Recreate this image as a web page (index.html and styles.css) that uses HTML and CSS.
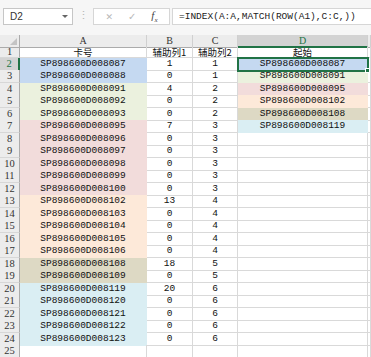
FILE: index.html
```html
<!DOCTYPE html>
<html lang="zh">
<head>
  <meta charset="UTF-8" />
  <title>Sheet1</title>
  <link rel="stylesheet" href="styles.css">
</head>
<body>

  <div class="fbar">
    <div class="namebox"><span>D2</span><span class="arrow"></span></div>
    <div class="grip">⋮</div>
    <div class="btns">
      <span class="x">✕</span>
      <span class="ok">✓</span>
      <span class="fx">f<sub>x</sub></span>
    </div>
    <div class="formula">=INDEX(A:A,MATCH(ROW(A1),C:C,))</div>
  </div>

  <div class="sheet">
    <div class="row head">
      <div class="rh corner"><span class="tri"></span></div>
      <div class="ch">A</div><div class="ch">B</div><div class="ch">C</div><div class="ch sel">D</div><div class="ch"></div>
    </div>
    <div class="row r1">
      <div class="rh">1</div>
      <div class="c cjk">卡号</div><div class="c cjk">辅助列1</div><div class="c cjk">辅助列2</div><div class="c cjk">起始</div><div class="c"></div>
    </div>
    <div class="row">
      <div class="rh sel">2</div>
      <div class="c blue">SP898600D008087</div><div class="c">1</div><div class="c">1</div><div class="c blue active">SP898600D008087<span class="handle"></span></div><div class="c"></div>
    </div>
    <div class="row">
      <div class="rh">3</div>
      <div class="c blue">SP898600D008088</div><div class="c">0</div><div class="c">1</div><div class="c green">SP898600D008091</div><div class="c"></div>
    </div>
    <div class="row">
      <div class="rh">4</div>
      <div class="c green">SP898600D008091</div><div class="c">4</div><div class="c">2</div><div class="c pink">SP898600D008095</div><div class="c"></div>
    </div>
    <div class="row">
      <div class="rh">5</div>
      <div class="c green">SP898600D008092</div><div class="c">0</div><div class="c">2</div><div class="c peach">SP898600D008102</div><div class="c"></div>
    </div>
    <div class="row">
      <div class="rh">6</div>
      <div class="c green">SP898600D008093</div><div class="c">0</div><div class="c">2</div><div class="c tan">SP898600D008108</div><div class="c"></div>
    </div>
    <div class="row">
      <div class="rh">7</div>
      <div class="c pink">SP898600D008095</div><div class="c">7</div><div class="c">3</div><div class="c sky">SP898600D008119</div><div class="c"></div>
    </div>
    <div class="row">
      <div class="rh">8</div>
      <div class="c pink">SP898600D008096</div><div class="c">0</div><div class="c">3</div><div class="c"></div><div class="c"></div>
    </div>
    <div class="row">
      <div class="rh">9</div>
      <div class="c pink">SP898600D008097</div><div class="c">0</div><div class="c">3</div><div class="c"></div><div class="c"></div>
    </div>
    <div class="row">
      <div class="rh">10</div>
      <div class="c pink">SP898600D008098</div><div class="c">0</div><div class="c">3</div><div class="c"></div><div class="c"></div>
    </div>
    <div class="row">
      <div class="rh">11</div>
      <div class="c pink">SP898600D008099</div><div class="c">0</div><div class="c">3</div><div class="c"></div><div class="c"></div>
    </div>
    <div class="row">
      <div class="rh">12</div>
      <div class="c pink">SP898600D008100</div><div class="c">0</div><div class="c">3</div><div class="c"></div><div class="c"></div>
    </div>
    <div class="row">
      <div class="rh">13</div>
      <div class="c peach">SP898600D008102</div><div class="c">13</div><div class="c">4</div><div class="c"></div><div class="c"></div>
    </div>
    <div class="row">
      <div class="rh">14</div>
      <div class="c peach">SP898600D008103</div><div class="c">0</div><div class="c">4</div><div class="c"></div><div class="c"></div>
    </div>
    <div class="row">
      <div class="rh">15</div>
      <div class="c peach">SP898600D008104</div><div class="c">0</div><div class="c">4</div><div class="c"></div><div class="c"></div>
    </div>
    <div class="row">
      <div class="rh">16</div>
      <div class="c peach">SP898600D008105</div><div class="c">0</div><div class="c">4</div><div class="c"></div><div class="c"></div>
    </div>
    <div class="row">
      <div class="rh">17</div>
      <div class="c peach">SP898600D008106</div><div class="c">0</div><div class="c">4</div><div class="c"></div><div class="c"></div>
    </div>
    <div class="row">
      <div class="rh">18</div>
      <div class="c tan">SP898600D008108</div><div class="c">18</div><div class="c">5</div><div class="c"></div><div class="c"></div>
    </div>
    <div class="row">
      <div class="rh">19</div>
      <div class="c tan">SP898600D008109</div><div class="c">0</div><div class="c">5</div><div class="c"></div><div class="c"></div>
    </div>
    <div class="row">
      <div class="rh">20</div>
      <div class="c sky">SP898600D008119</div><div class="c">20</div><div class="c">6</div><div class="c"></div><div class="c"></div>
    </div>
    <div class="row">
      <div class="rh">21</div>
      <div class="c sky">SP898600D008120</div><div class="c">0</div><div class="c">6</div><div class="c"></div><div class="c"></div>
    </div>
    <div class="row">
      <div class="rh">22</div>
      <div class="c sky">SP898600D008121</div><div class="c">0</div><div class="c">6</div><div class="c"></div><div class="c"></div>
    </div>
    <div class="row">
      <div class="rh">23</div>
      <div class="c sky">SP898600D008122</div><div class="c">0</div><div class="c">6</div><div class="c"></div><div class="c"></div>
    </div>
    <div class="row">
      <div class="rh">24</div>
      <div class="c sky">SP898600D008123</div><div class="c">0</div><div class="c">6</div><div class="c"></div><div class="c"></div>
    </div>
    <div class="row">
      <div class="rh">25</div>
      <div class="c"></div><div class="c"></div><div class="c"></div><div class="c"></div><div class="c"></div>
    </div>
  </div>

</body>
</html>
```

FILE: styles.css
```css
* { box-sizing: border-box; }

body {
  margin: 0;
  width: 371px;
  height: 357px;
  overflow: hidden;
  background: #fff;
  font-family: "Liberation Mono", monospace;
  font-size: 9.5px;
  color: #111;
}

/* formula bar */
.fbar {
  height: 35px;
  background: #f6f6f6;
  display: flex;
  align-items: flex-start;
  padding-top: 8px;
  padding-left: 3px;
}

.namebox {
  width: 70px;
  height: 17px;
  background: #fff;
  border: 1px solid #c6c6c6;
  display: flex;
  align-items: center;
  justify-content: space-between;
  padding: 0 4px 0 6px;
  font-family: "Liberation Sans", sans-serif;
  font-size: 10px;
  color: #333;
}

.arrow {
  width: 0;
  height: 0;
  border-left: 3px solid transparent;
  border-right: 3px solid transparent;
  border-top: 3px solid #666;
}

.grip {
  width: 20px;
  text-align: center;
  color: #b5b5b5;
  font-size: 11px;
  line-height: 17px;
}

.btns {
  width: 77px;
  height: 17px;
  background: #fff;
  border: 1px solid #d6d6d6;
  display: flex;
  align-items: center;
  justify-content: space-around;
  padding: 0 4px;
  font-family: "DejaVu Sans", sans-serif;
}

.btns .x { color: #b8b8b8; font-size: 9px; }
.btns .ok { color: #b8b8b8; font-size: 10px; }

.btns .fx {
  font-family: "Liberation Serif", serif;
  font-style: italic;
  font-size: 11px;
  color: #444;
}

.btns .fx sub { font-size: 7px; }

.formula {
  flex: 1;
  height: 17px;
  margin-left: 2px;
  background: #fff;
  border: 1px solid #d6d6d6;
  border-right: none;
  padding-left: 6px;
  line-height: 15px;
  color: #222;
}

/* sheet grid */
.sheet {
  display: flex;
  flex-direction: column;
}

.row {
  display: grid;
  grid-template-columns: 20px 127px 46px 45px 130px 1fr;
  height: 12.5px;
}

.row.head { height: 12px; }
.row.r1 { height: 10.5px; }

.rh {
  background: #ececec;
  border-right: 1px solid #ababab;
  border-bottom: 1px solid #d7d7d7;
  text-align: center;
  line-height: 12px;
  font-family: "Liberation Serif", serif;
  font-size: 10.5px;
  color: #333;
}

.r1 .rh { line-height: 10px; }

.rh.sel {
  background: #d3d3d3;
  color: #217346;
  border-right: 2px solid #217346;
}

.corner {
  position: relative;
  border-bottom-color: #ababab;
}

.tri {
  position: absolute;
  right: 2px;
  bottom: 2px;
  width: 0;
  height: 0;
  border-left: 7px solid transparent;
  border-bottom: 7px solid #c4c4c4;
}

.ch {
  background: #ececec;
  border-right: 1px solid #d0d0d0;
  border-bottom: 1px solid #ababab;
  text-align: center;
  line-height: 11px;
  font-family: "Liberation Serif", serif;
  font-size: 10px;
  color: #333;
}

.ch.sel {
  background: #d3d3d3;
  color: #217346;
  border-bottom: 2px solid #217346;
}

.c {
  border-right: 1px solid #d9d9d9;
  border-bottom: 1px solid #d9d9d9;
  text-align: center;
  line-height: 12px;
  white-space: nowrap;
  overflow: hidden;
}

.cjk {
  font-family: "Noto Sans CJK SC", sans-serif;
  font-size: 9.5px;
  line-height: 10px;
  overflow: visible;
}

.blue  { background: #c5d9f1; border-color: #c5d9f1; }
.green { background: #ebf1de; border-color: #ebf1de; }
.pink  { background: #f2dcdb; border-color: #f2dcdb; }
.peach { background: #fde9d9; border-color: #fde9d9; }
.tan   { background: #ddd9c4; border-color: #ddd9c4; }
.sky   { background: #daeef3; border-color: #daeef3; }

.active {
  position: relative;
  overflow: visible;
  outline: 2px solid #217346;
  outline-offset: -1px;
  line-height: 11px;
}

.handle {
  position: absolute;
  right: -3px;
  bottom: -3px;
  width: 5px;
  height: 5px;
  background: #217346;
  border: 1px solid #fff;
}
```
